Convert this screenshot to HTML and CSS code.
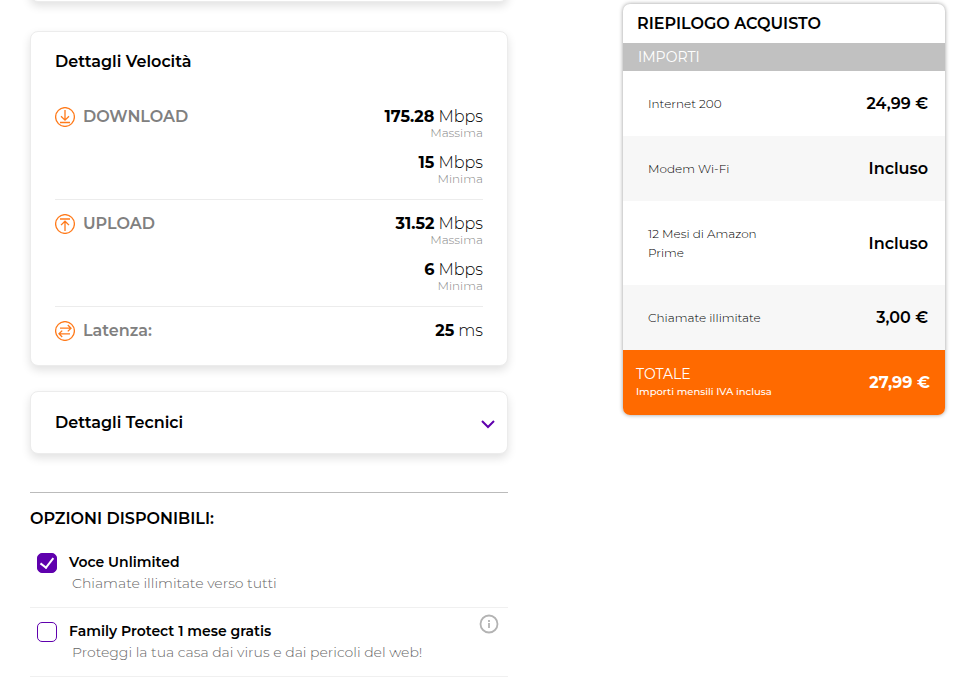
FILE: index.html
```html
<!DOCTYPE html>
<html lang="it">
<head>
  <meta charset="UTF-8">
  <meta name="viewport" content="width=device-width, initial-scale=1.0">
  <title>Riepilogo acquisto</title>
  <link rel="stylesheet" href="styles.css">
</head>
<body>
  <div class="page">
    <main class="offer">
      <div class="card card-end"></div>

      <section class="card speed">
        <h2 class="card-title">Dettagli Velocità</h2>
        <div class="speed-row">
          <svg class="speed-icon" viewBox="0 0 20 20">
            <circle cx="10" cy="10" r="9.4"/>
            <path d="M10 3v10M6 9.3l4 3.9 4-3.9M5 15.5h10"/>
          </svg>
          <h3 class="speed-name">DOWNLOAD</h3>
          <div class="speed-values">
            <p class="value"><b>175.28</b> Mbps</p>
            <p class="hint">Massima</p>
            <p class="value"><b>15</b> Mbps</p>
            <p class="hint">Minima</p>
          </div>
        </div>
        <div class="speed-row">
          <svg class="speed-icon" viewBox="0 0 20 20">
            <circle cx="10" cy="10" r="9.4"/>
            <path d="M10 17V7.2M6 11.1l4-3.9 4 3.9M5 5h10"/>
          </svg>
          <h3 class="speed-name">UPLOAD</h3>
          <div class="speed-values">
            <p class="value"><b>31.52</b> Mbps</p>
            <p class="hint">Massima</p>
            <p class="value"><b>6</b> Mbps</p>
            <p class="hint">Minima</p>
          </div>
        </div>
        <div class="speed-row">
          <svg class="speed-icon" viewBox="0 0 20 20">
            <circle cx="10" cy="10" r="9.4"/>
            <path d="M5 7.2h11M12.8 4l3.2 3.2-3.2 3.2M15 12.8H4M7.2 9.6L4 12.8 7.2 16"/>
          </svg>
          <h3 class="speed-name">Latenza:</h3>
          <div class="speed-values">
            <p class="value"><b>25</b> ms</p>
          </div>
        </div>
      </section>

      <button class="card tech" type="button">
        <span class="card-title">Dettagli Tecnici</span>
        <svg class="chevron" viewBox="0 0 14 10"><path d="M1 3l6 6 6-6"/></svg>
      </button>

      <section class="options">
        <h2 class="options-title">OPZIONI DISPONIBILI:</h2>
        <div class="option">
          <input type="checkbox" id="voce" checked>
          <label for="voce">
            <span class="option-name">Voce Unlimited</span>
            <span class="option-text">Chiamate illimitate verso tutti</span>
          </label>
        </div>
        <div class="option">
          <input type="checkbox" id="family">
          <label for="family">
            <span class="option-name">Family Protect 1 mese gratis</span>
            <span class="option-text">Proteggi la tua casa dai virus e dai pericoli del web!</span>
          </label>
          <button class="info" type="button" aria-label="Informazioni">
            <svg viewBox="0 0 20 20">
              <circle cx="10" cy="10" r="8.5"/>
              <path d="M10 9v5M10 6v2"/>
            </svg>
          </button>
        </div>
      </section>
    </main>

    <aside class="summary">
      <h2 class="summary-title">RIEPILOGO ACQUISTO</h2>
      <table>
        <thead>
          <tr><th colspan="2">IMPORTI</th></tr>
        </thead>
        <tbody>
          <tr><td>Internet 200</td><td class="price">24,99 €</td></tr>
          <tr><td>Modem Wi-Fi</td><td class="price">Incluso</td></tr>
          <tr><td>12 Mesi di Amazon Prime</td><td class="price">Incluso</td></tr>
          <tr><td>Chiamate illimitate</td><td class="price">3,00 €</td></tr>
        </tbody>
        <tfoot>
          <tr>
            <td>TOTALE <small>Importi mensili IVA inclusa</small></td>
            <td class="price">27,99 €</td>
          </tr>
        </tfoot>
      </table>
    </aside>
  </div>
</body>
</html>
```
FILE: styles.css
```css
* {
  box-sizing: border-box;
}
body {
  margin: 0;
  background-color: #fff;
  color: #000;
  font-family: Montserrat, Inter, sans-serif;
  font-size: 16px;
  line-height: 24px;
}
h2, h3, p {
  margin: 0;
}
button {
  font: inherit;
  color: inherit;
  cursor: pointer;
}
.page {
  display: grid;
  grid-template-columns: minmax(0, 1fr) 322px;
  gap: 115px;
  align-items: start;
  padding: 0 31px 0 30px;
}

/* cards */
.card {
  display: block;
  width: 100%;
  padding: 18px 24px 24px;
  background-color: #fff;
  border: 1px solid #ececec;
  border-radius: 8px;
  box-shadow: 0 4px 10px rgba(0, 0, 0, 0.12);
}
/* bottom edge of the card that runs off the top */
.card-end {
  height: 32px;
  margin: -30px 0 29px;
  padding: 0;
}
.card-title {
  font-size: 16px;
  font-weight: 600;
  line-height: 24px;
}

/* speed details */
.speed .card-title {
  margin-bottom: 19px;
}
.speed-row {
  display: flex;
  padding: 14px 0;
  border-bottom: 1px solid #ececec;
}
.speed-row:last-child {
  padding-bottom: 0;
  border-bottom: 0;
}
.speed-icon {
  width: 20px;
  height: 20px;
  margin-right: 8px;
  fill: none;
  stroke: #ff7a1a;
  stroke-width: 1.3;
}
.speed-name {
  flex: 1;
  font-size: 16px;
  font-weight: 600;
  line-height: 20px;
  color: #808080;
}
.speed-values {
  text-align: right;
}
.value {
  font-size: 16px;
  font-weight: 300;
  line-height: 20px;
}
.value b {
  font-weight: 700;
}
.hint {
  font-size: 12px;
  font-weight: 300;
  line-height: 12px;
  color: #888;
}
.hint + .value {
  margin-top: 14px;
}

.tech {
  display: flex;
  align-items: center;
  justify-content: space-between;
  margin-top: 25px;
  padding: 19px 12px 18px 24px;
}
.chevron {
  width: 14px;
  height: 10px;
  overflow: visible;
  fill: none;
  stroke: #5f00ad;
  stroke-width: 2;
}

/* options */
.options {
  margin-top: 38px;
  padding-top: 14px;
  border-top: 1px solid #bbb;
}
.options-title {
  margin-bottom: 8px;
  font-size: 16px;
  font-weight: 600;
}
.option {
  display: flex;
  align-items: flex-start;
  padding: 6px 9px 14px 7px;
  border-bottom: 1px solid #f0f0f0;
}
.option input {
  appearance: none;
  width: 20px;
  height: 20px;
  margin: 8px 12px 0 0;
  border: 1px solid #5f00ad;
  border-radius: 5px;
  cursor: pointer;
}
.option input:checked {
  background: #5f00ad;
}
.option input:checked::before {
  content: "";
  display: block;
  width: 6px;
  height: 11px;
  margin: 2px 0 0 6px;
  border: solid #fff;
  border-width: 0 2px 2px 0;
  transform: translate(-1px, -1px) rotate(38deg);
}
.option label {
  flex: 1;
  padding-top: 6px;
  cursor: pointer;
}
.option-name {
  display: block;
  font-size: 14px;
  font-weight: 600;
  line-height: 22px;
}
.option-text {
  display: block;
  padding-left: 3px;
  font-size: 14px;
  font-weight: 300;
  line-height: 20px;
  color: #666;
}
.info {
  width: 20px;
  height: 20px;
  padding: 0;
  border: 0;
  background: none;
}
.info svg {
  display: block;
  fill: none;
  stroke: #b3b3b3;
  stroke-width: 1.8;
}

/* purchase summary */
.summary {
  margin-top: 4px;
  overflow: hidden;
  background-color: #fff;
  border-radius: 7px;
  box-shadow: 0 0 4px rgba(0, 0, 0, 0.4);
}
.summary-title {
  padding: 8px 14px 7px;
  font-size: 16px;
  font-weight: 600;
}
.summary table {
  width: 100%;
  border-collapse: collapse;
}
.summary th {
  padding: 2px 15px;
  background-color: #c1c1c1;
  color: #fff;
  font-size: 14px;
  font-weight: 400;
  text-align: left;
}
.summary td {
  padding: 23px 0 23px 25px;
  font-size: 12px;
  font-weight: 300;
  line-height: 19px;
}
.summary tbody td:first-child {
  width: 50%;
}
.summary tbody tr:nth-child(even) {
  background-color: #f7f7f7;
}
.summary .price {
  padding: 0 17px 0 0;
  font-size: 16px;
  font-weight: 600;
  text-align: right;
}
.summary tfoot {
  background-color: #ff6a00;
  color: #fff;
}
.summary tfoot td:first-child {
  padding: 14px 0 15px 13px;
  font-size: 14px;
  font-weight: 400;
  line-height: 20px;
}
.summary small {
  display: block;
  font-size: 10px;
  font-weight: 500;
  line-height: 16px;
}
.summary tfoot .price {
  padding-right: 15px;
  font-weight: 700;
}
```
